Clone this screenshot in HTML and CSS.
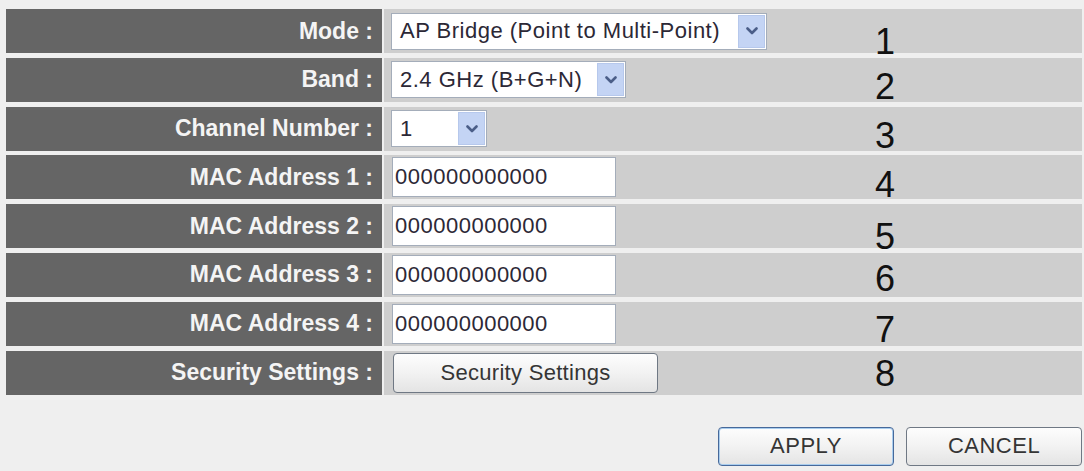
FILE: index.html
```html
<!DOCTYPE html>
<html>
<head>
<meta charset="utf-8">
<title>Wireless Settings</title>
<link rel="stylesheet" href="styles.css">
</head>
<body>
<div class="panel">
  <div class="rows">
    <div class="row">
      <div class="label">Mode :</div>
      <div class="value">
        <div class="ctrl">
          <div class="select select-mode"><span class="select-text">AP Bridge (Point to Multi-Point)</span><span class="select-btn"><svg width="12" height="8" viewBox="0 0 12 8"><path d="M1.5 1.5 L6 6 L10.5 1.5" fill="none" stroke="#4b5e88" stroke-width="2.6" stroke-linecap="round" stroke-linejoin="round"/></svg></span></div>
        </div>
        <div class="num num-low">1</div>
      </div>
    </div>
    <div class="row">
      <div class="label">Band :</div>
      <div class="value">
        <div class="ctrl">
          <div class="select select-band"><span class="select-text">2.4 GHz (B+G+N)</span><span class="select-btn"><svg width="12" height="8" viewBox="0 0 12 8"><path d="M1.5 1.5 L6 6 L10.5 1.5" fill="none" stroke="#4b5e88" stroke-width="2.6" stroke-linecap="round" stroke-linejoin="round"/></svg></span></div>
        </div>
        <div class="num">2</div>
      </div>
    </div>
    <div class="row">
      <div class="label">Channel Number :</div>
      <div class="value">
        <div class="ctrl">
          <div class="select select-channel"><span class="select-text">1</span><span class="select-btn"><svg width="12" height="8" viewBox="0 0 12 8"><path d="M1.5 1.5 L6 6 L10.5 1.5" fill="none" stroke="#4b5e88" stroke-width="2.6" stroke-linecap="round" stroke-linejoin="round"/></svg></span></div>
        </div>
        <div class="num">3</div>
      </div>
    </div>
    <div class="row">
      <div class="label">MAC Address 1 :</div>
      <div class="value">
        <div class="ctrl"><div class="field">000000000000</div></div>
        <div class="num">4</div>
      </div>
    </div>
    <div class="row">
      <div class="label">MAC Address 2 :</div>
      <div class="value">
        <div class="ctrl"><div class="field">000000000000</div></div>
        <div class="num num-low">5</div>
      </div>
    </div>
    <div class="row">
      <div class="label">MAC Address 3 :</div>
      <div class="value">
        <div class="ctrl"><div class="field">000000000000</div></div>
        <div class="num num-high">6</div>
      </div>
    </div>
    <div class="row">
      <div class="label">MAC Address 4 :</div>
      <div class="value">
        <div class="ctrl"><div class="field">000000000000</div></div>
        <div class="num num-mid">7</div>
      </div>
    </div>
    <div class="row">
      <div class="label">Security Settings :</div>
      <div class="value">
        <div class="ctrl"><div class="btn btn-security">Security Settings</div></div>
        <div class="num num-top">8</div>
      </div>
    </div>
  </div>
  <div class="actions">
    <div class="btn btn-action btn-default">APPLY</div>
    <div class="btn btn-action">CANCEL</div>
  </div>
</div>
</body>
</html>
```
FILE: styles.css
```css
html, body {
  margin: 0;
  padding: 0;
  background: #efefef;
}

body {
  font-family: "Liberation Sans", Arial, sans-serif;
}

.panel {
  padding: 9px 2px 0 6px;
  height: 462px;
  overflow: hidden;
}

.rows {
  display: flex;
  flex-direction: column;
  gap: 4.8px;
}

.row {
  display: grid;
  grid-template-columns: 376px 698px;
  column-gap: 2px;
  height: 44px;
}

.label {
  background: #656565;
  color: #f4f4f4;
  font-weight: bold;
  font-size: 23px;
  display: flex;
  align-items: center;
  justify-content: flex-end;
  padding-right: 9px;
  white-space: nowrap;
}

.value {
  background: #cecece;
  display: grid;
  grid-template-columns: 454px 80px 1fr;
  padding-left: 7px;
  align-items: center;
}

.ctrl {
  display: flex;
  align-items: center;
}

.select {
  display: flex;
  align-items: stretch;
  height: 37px;
  box-sizing: border-box;
  background: #ffffff;
  border: 1px solid #a4adba;
  font-size: 22px;
  letter-spacing: 0.5px;
  color: #2c2836;
}

.select-text {
  flex: 1;
  display: flex;
  align-items: center;
  padding-left: 8px;
  white-space: nowrap;
}

.select-btn {
  width: 27px;
  margin: 1px;
  background: #c4d4f4;
  border: 1px solid #b6c8ec;
  box-sizing: border-box;
  display: flex;
  align-items: center;
  justify-content: center;
}

.select-mode { width: 376px; }
.select-band { width: 235px; }
.select-channel { width: 96px; }

.field {
  width: 224px;
  height: 40px;
  margin-left: 1px;
  box-sizing: border-box;
  background: #ffffff;
  border: 1px solid #a4adba;
  font-size: 22px;
  letter-spacing: 0.5px;
  color: #2c2836;
  display: flex;
  align-items: center;
  padding-left: 2px;
}

.num {
  grid-column: 2;
  align-self: end;
  text-align: center;
  font-size: 36px;
  line-height: 1;
  color: #111111;
  margin-bottom: -3.5px;
}

.num-low { margin-bottom: -6.5px; }
.num-high { margin-bottom: -0.5px; }
.num-mid { margin-bottom: -2.5px; }
.num-top { margin-bottom: 2.5px; }

.btn {
  box-sizing: border-box;
  display: flex;
  align-items: center;
  justify-content: center;
  font-size: 22px;
  letter-spacing: 0.3px;
  color: #353535;
  border: 1px solid #6f7884;
  border-radius: 4px;
  background: linear-gradient(#fdfdfd 0%, #f2f2f2 50%, #e4e4e4 100%);
  white-space: nowrap;
}

.btn-security {
  width: 265px;
  height: 40px;
  margin-left: 2px;
}

.actions {
  display: flex;
  justify-content: flex-end;
  gap: 12px;
  margin-top: 32px;
}

.btn-action {
  width: 176px;
  height: 39px;
  letter-spacing: 0.5px;
}

.btn-default {
  border-color: #47699a;
  box-shadow: inset 0 0 0 1px #a9cdee;
}
```
